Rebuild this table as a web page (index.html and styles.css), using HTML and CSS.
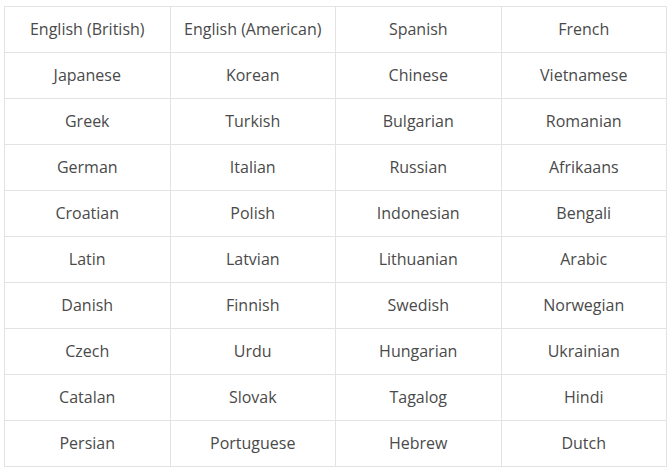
FILE: index.html
```html
<!DOCTYPE html>
<html>
<head>
<meta charset="utf-8">
<link rel="stylesheet" href="styles.css">
</head>
<body>
<table class="langs">
<tr><td>English (British)</td><td>English (American)</td><td>Spanish</td><td>French</td></tr>
<tr><td>Japanese</td><td>Korean</td><td>Chinese</td><td>Vietnamese</td></tr>
<tr><td>Greek</td><td>Turkish</td><td>Bulgarian</td><td>Romanian</td></tr>
<tr><td>German</td><td>Italian</td><td>Russian</td><td>Afrikaans</td></tr>
<tr><td>Croatian</td><td>Polish</td><td>Indonesian</td><td>Bengali</td></tr>
<tr><td>Latin</td><td>Latvian</td><td>Lithuanian</td><td>Arabic</td></tr>
<tr><td>Danish</td><td>Finnish</td><td>Swedish</td><td>Norwegian</td></tr>
<tr><td>Czech</td><td>Urdu</td><td>Hungarian</td><td>Ukrainian</td></tr>
<tr><td>Catalan</td><td>Slovak</td><td>Tagalog</td><td>Hindi</td></tr>
<tr><td>Persian</td><td>Portuguese</td><td>Hebrew</td><td>Dutch</td></tr>
</table>
</body>
</html>
```
FILE: styles.css
```css
html, body {
  margin: 0;
  background: #ffffff;
}
body {
  padding: 6px 0 0 4px;
  font-family: "Open Sans", "Liberation Sans", sans-serif;
  font-size: 16px;
  color: #4a4a4a;
}
.langs {
  border-collapse: collapse;
  width: 663px;
  table-layout: fixed;
}
.langs td {
  border: 1px solid #e3e3e3;
  height: 46px;
  padding: 0 0 2px;
  box-sizing: border-box;
  text-align: center;
  vertical-align: middle;
  line-height: 22px;
}
```
